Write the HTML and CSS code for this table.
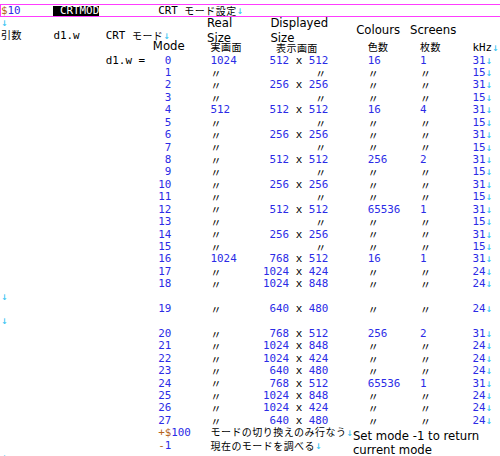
FILE: index.html
```html
<!DOCTYPE html>
<html lang="ja">
<head>
<meta charset="utf-8">
<title>CRTMOD</title>
<link rel="stylesheet" href="styles.css">
</head>
<body>
<div class="doc">
  <div class="line title">
    <span class="c0"><span class="h">$</span><span class="n">10</span></span>
    <span class="c8 inv"> CRTMOD</span>
    <span class="c24">CRT <span class="j">モード設定</span><span class="r">↓</span></span>
  </div>
  <div class="line">
    <span class="c0 r">↓</span>
    <span class="c32 lab real">Real<br>Size</span>
    <span class="c40 lab disp">Displayed<br>Size</span>
    <span class="c56 lab colours">Colours</span>
    <span class="c64 lab screens">Screens</span>
  </div>
  <div class="line">
    <span class="c0 j">引数</span>
    <span class="c8">d1.w</span>
    <span class="c16">CRT <span class="j">モード</span><span class="r">↓</span></span>
  </div>
  <div class="line">
    <span class="c24 lab mode">Mode</span>
    <span class="c32 j">実画面</span>
    <span class="c40">  <span class="j">表示画面</span></span>
    <span class="c56 j">色数</span>
    <span class="c64 j">枚数</span>
    <span class="c72">kHz<span class="r">↓</span></span>
  </div>

  <div class="line"><span class="c16">d1.w =</span><span class="c24 n"> 0</span><span class="c32 n">1024</span><span class="c40"> <span class="n">512</span> x <span class="n">512</span></span><span class="c56 n">16</span><span class="c64 n">1</span><span class="c72"><span class="n">31</span><span class="r">↓</span></span></div>
  <div class="line"><span class="c24 n"> 1</span><span class="c32 d">〃</span><span class="c48 d">〃</span><span class="c56 d">〃</span><span class="c64 d">〃</span><span class="c72"><span class="n">15</span><span class="r">↓</span></span></div>
  <div class="line"><span class="c24 n"> 2</span><span class="c32 d">〃</span><span class="c40"> <span class="n">256</span> x <span class="n">256</span></span><span class="c56 d">〃</span><span class="c64 d">〃</span><span class="c72"><span class="n">31</span><span class="r">↓</span></span></div>
  <div class="line"><span class="c24 n"> 3</span><span class="c32 d">〃</span><span class="c48 d">〃</span><span class="c56 d">〃</span><span class="c64 d">〃</span><span class="c72"><span class="n">15</span><span class="r">↓</span></span></div>
  <div class="line"><span class="c24 n"> 4</span><span class="c32 n">512</span><span class="c40"> <span class="n">512</span> x <span class="n">512</span></span><span class="c56 n">16</span><span class="c64 n">4</span><span class="c72"><span class="n">31</span><span class="r">↓</span></span></div>
  <div class="line"><span class="c24 n"> 5</span><span class="c32 d">〃</span><span class="c48 d">〃</span><span class="c56 d">〃</span><span class="c64 d">〃</span><span class="c72"><span class="n">15</span><span class="r">↓</span></span></div>
  <div class="line"><span class="c24 n"> 6</span><span class="c32 d">〃</span><span class="c40"> <span class="n">256</span> x <span class="n">256</span></span><span class="c56 d">〃</span><span class="c64 d">〃</span><span class="c72"><span class="n">31</span><span class="r">↓</span></span></div>
  <div class="line"><span class="c24 n"> 7</span><span class="c32 d">〃</span><span class="c48 d">〃</span><span class="c56 d">〃</span><span class="c64 d">〃</span><span class="c72"><span class="n">15</span><span class="r">↓</span></span></div>
  <div class="line"><span class="c24 n"> 8</span><span class="c32 d">〃</span><span class="c40"> <span class="n">512</span> x <span class="n">512</span></span><span class="c56 n">256</span><span class="c64 n">2</span><span class="c72"><span class="n">31</span><span class="r">↓</span></span></div>
  <div class="line"><span class="c24 n"> 9</span><span class="c32 d">〃</span><span class="c48 d">〃</span><span class="c56 d">〃</span><span class="c64 d">〃</span><span class="c72"><span class="n">15</span><span class="r">↓</span></span></div>
  <div class="line"><span class="c24 n">10</span><span class="c32 d">〃</span><span class="c40"> <span class="n">256</span> x <span class="n">256</span></span><span class="c56 d">〃</span><span class="c64 d">〃</span><span class="c72"><span class="n">31</span><span class="r">↓</span></span></div>
  <div class="line"><span class="c24 n">11</span><span class="c32 d">〃</span><span class="c48 d">〃</span><span class="c56 d">〃</span><span class="c64 d">〃</span><span class="c72"><span class="n">15</span><span class="r">↓</span></span></div>
  <div class="line"><span class="c24 n">12</span><span class="c32 d">〃</span><span class="c40"> <span class="n">512</span> x <span class="n">512</span></span><span class="c56 n">65536</span><span class="c64 n">1</span><span class="c72"><span class="n">31</span><span class="r">↓</span></span></div>
  <div class="line"><span class="c24 n">13</span><span class="c32 d">〃</span><span class="c48 d">〃</span><span class="c56 d">〃</span><span class="c64 d">〃</span><span class="c72"><span class="n">15</span><span class="r">↓</span></span></div>
  <div class="line"><span class="c24 n">14</span><span class="c32 d">〃</span><span class="c40"> <span class="n">256</span> x <span class="n">256</span></span><span class="c56 d">〃</span><span class="c64 d">〃</span><span class="c72"><span class="n">31</span><span class="r">↓</span></span></div>
  <div class="line"><span class="c24 n">15</span><span class="c32 d">〃</span><span class="c48 d">〃</span><span class="c56 d">〃</span><span class="c64 d">〃</span><span class="c72"><span class="n">15</span><span class="r">↓</span></span></div>
  <div class="line"><span class="c24 n">16</span><span class="c32 n">1024</span><span class="c40"> <span class="n">768</span> x <span class="n">512</span></span><span class="c56 n">16</span><span class="c64 n">1</span><span class="c72"><span class="n">31</span><span class="r">↓</span></span></div>
  <div class="line"><span class="c24 n">17</span><span class="c32 d">〃</span><span class="c40"><span class="n">1024</span> x <span class="n">424</span></span><span class="c56 d">〃</span><span class="c64 d">〃</span><span class="c72"><span class="n">24</span><span class="r">↓</span></span></div>
  <div class="line"><span class="c24 n">18</span><span class="c32 d">〃</span><span class="c40"><span class="n">1024</span> x <span class="n">848</span></span><span class="c56 d">〃</span><span class="c64 d">〃</span><span class="c72"><span class="n">24</span><span class="r">↓</span></span></div>
  <div class="line"><span class="c0 r">↓</span></div>
  <div class="line"><span class="c24 n">19</span><span class="c32 d">〃</span><span class="c40"> <span class="n">640</span> x <span class="n">480</span></span><span class="c56 d">〃</span><span class="c64 d">〃</span><span class="c72"><span class="n">24</span><span class="r">↓</span></span></div>
  <div class="line"><span class="c0 r">↓</span></div>
  <div class="line"><span class="c24 n">20</span><span class="c32 d">〃</span><span class="c40"> <span class="n">768</span> x <span class="n">512</span></span><span class="c56 n">256</span><span class="c64 n">2</span><span class="c72"><span class="n">31</span><span class="r">↓</span></span></div>
  <div class="line"><span class="c24 n">21</span><span class="c32 d">〃</span><span class="c40"><span class="n">1024</span> x <span class="n">848</span></span><span class="c56 d">〃</span><span class="c64 d">〃</span><span class="c72"><span class="n">24</span><span class="r">↓</span></span></div>
  <div class="line"><span class="c24 n">22</span><span class="c32 d">〃</span><span class="c40"><span class="n">1024</span> x <span class="n">424</span></span><span class="c56 d">〃</span><span class="c64 d">〃</span><span class="c72"><span class="n">24</span><span class="r">↓</span></span></div>
  <div class="line"><span class="c24 n">23</span><span class="c32 d">〃</span><span class="c40"> <span class="n">640</span> x <span class="n">480</span></span><span class="c56 d">〃</span><span class="c64 d">〃</span><span class="c72"><span class="n">24</span><span class="r">↓</span></span></div>
  <div class="line"><span class="c24 n">24</span><span class="c32 d">〃</span><span class="c40"> <span class="n">768</span> x <span class="n">512</span></span><span class="c56 n">65536</span><span class="c64 n">1</span><span class="c72"><span class="n">31</span><span class="r">↓</span></span></div>
  <div class="line"><span class="c24 n">25</span><span class="c32 d">〃</span><span class="c40"><span class="n">1024</span> x <span class="n">848</span></span><span class="c56 d">〃</span><span class="c64 d">〃</span><span class="c72"><span class="n">24</span><span class="r">↓</span></span></div>
  <div class="line"><span class="c24 n">26</span><span class="c32 d">〃</span><span class="c40"><span class="n">1024</span> x <span class="n">424</span></span><span class="c56 d">〃</span><span class="c64 d">〃</span><span class="c72"><span class="n">24</span><span class="r">↓</span></span></div>
  <div class="line"><span class="c24 n">27</span><span class="c32 d">〃</span><span class="c40"> <span class="n">640</span> x <span class="n">480</span></span><span class="c56 d">〃</span><span class="c64 d">〃</span><span class="c72"><span class="n">24</span><span class="r">↓</span></span></div>

  <div class="line">
    <span class="c24"><span class="h">+$</span><span class="n">100</span></span>
    <span class="c32 tail"><span class="j">モードの切り換えのみ行なう</span><span class="r">↓</span><span class="note">Set mode -1 to return current mode</span></span>
  </div>
  <div class="line">
    <span class="c24"><span class="h">-</span><span class="n">1</span></span>
    <span class="c32"><span class="j">現在のモードを調べる</span><span class="r">↓</span></span>
  </div>
  <div class="line"><span class="c0 r">↓</span></div>
</div>
</body>
</html>
```
FILE: styles.css
```css
* {
  box-sizing: border-box;
  margin: 0;
  padding: 0;
}

html, body {
  background: #ffffff;
  overflow: hidden;
}

body {
  width: 500px;
  height: 456px;
  font-family: "DejaVu Sans Mono", "Noto Sans CJK JP", monospace;
  font-size: 10.88px;
  color: #000000;
}

.doc {
  display: flex;
  flex-direction: column;
}

.line {
  display: grid;
  grid-template-columns: repeat(9, 8ch) 1fr;
  height: 12.43px;
  line-height: 12.43px;
  padding-left: 1px;
  white-space: pre;
  flex: none;
}

.title {
  height: 13px;
  margin-top: 4px;
  margin-bottom: 0.36px;
  padding-left: 0;
  border-top: 1px solid #ff3cff;
  border-bottom: 1px solid #ff3cff;
  border-left: 1px solid #ff3cff;
  line-height: 12.43px;
  align-items: start;
}

.c0 { grid-column: 1; }
.c8 { grid-column: 2; }
.c16 { grid-column: 3; }
.c24 { grid-column: 4; }
.c32 { grid-column: 5; }
.c40 { grid-column: 6; }
.c48 { grid-column: 7; }
.c56 { grid-column: 8; }
.c64 { grid-column: 9; }
.c72 { grid-column: 10; }

.n { color: #2b2be6; }
.h { color: #b5631c; }
.r { color: #34c4f2; }

.j {
  font-family: "Noto Sans CJK JP", sans-serif;
  font-size: 10px;
  letter-spacing: 0.45px;
  line-height: 1;
  vertical-align: -0.6px;
}

.d {
  font-family: "Noto Sans CJK JP", sans-serif;
  line-height: 1;
  align-self: center;
}

.inv {
  background: #000000;
  color: #ffffff;
  width: 7ch;
  height: 9.5px;
  margin-top: 1px;
  line-height: 10.4px;
}

.lab {
  font-family: "DejaVu Sans", sans-serif;
  font-size: 11.7px;
  line-height: 15px;
  align-self: start;
}

.real { margin: -1.36px 0 0 -3.5px; }
.disp { margin: -1.36px 0 0 7.5px; }
.colours { margin: 5.4px 0 0 -11.5px; }
.screens { margin: 5.4px 0 0 -10px; }
.mode { margin: -3.5px 0 0 -5.3px; }

.tail {
  grid-column: 5 / -1;
  display: flex;
  align-items: flex-start;
}

.note {
  flex: 1;
  white-space: normal;
  font-family: "DejaVu Sans", sans-serif;
  font-size: 11.7px;
  line-height: 14.5px;
  margin-top: 1.5px;
}
```
